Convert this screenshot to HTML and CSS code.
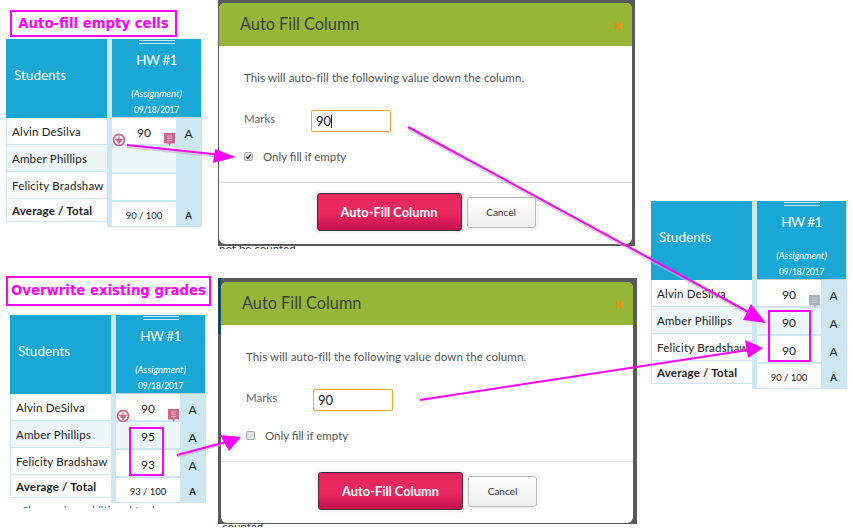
FILE: index.html
```html
<!DOCTYPE html>
<html lang="en">
<head>
    <meta charset="UTF-8">
    <title>Auto Fill Column</title>
    <link rel="stylesheet" href="styles.css">
</head>
<body>
    <div class="canvas">
        <div class="caption caption_top">Auto-fill empty cells</div>
        <div class="caption caption_bottom">Overwrite existing grades</div>

        <div class="sheet sheet_top">
            <div class="names">
                <div class="names-head">Students</div>
                <div class="name">Alvin DeSilva</div>
                <div class="name name_alt">Amber Phillips</div>
                <div class="name">Felicity Bradshaw</div>
                <div class="name name_total">Average / Total</div>
            </div>
            <div class="column">
                <div class="column-head">
                    <div class="grip"></div>
                    <div class="hw">HW #1</div>
                    <div class="kind">(Assignment)</div>
                    <div class="date">09/18/2017</div>
                </div>
                <div class="row">
                    <div class="mark">90
                        <svg class="fill-icon" viewBox="0 0 14 14"><circle cx="7" cy="7" r="5.5"/><path d="M7 3.2v3.4M3.9 6.4h6.2L7 10.2z"/></svg>
                        <svg class="note-icon" viewBox="0 0 11 14"><path d="M0 0h11v10.5H7l-1.5 2.5-1-2.5H0z"/><path class="note-lines" d="M3 3h5M3 5.2h5M3 7.4h5"/></svg>
                    </div>
                    <div class="grade">A</div>
                </div>
                <div class="row">
                    <div class="mark mark_alt"></div>
                    <div class="grade"></div>
                </div>
                <div class="row">
                    <div class="mark"></div>
                    <div class="grade"></div>
                </div>
                <div class="row row_total">
                    <div class="mark">90 / 100</div>
                    <div class="grade">A</div>
                </div>
            </div>
        </div>

        <div class="sheet sheet_bottom">
            <div class="names">
                <div class="names-head">Students</div>
                <div class="name">Alvin DeSilva</div>
                <div class="name name_alt">Amber Phillips</div>
                <div class="name">Felicity Bradshaw</div>
                <div class="name name_total">Average / Total</div>
            </div>
            <div class="column">
                <div class="column-head">
                    <div class="grip"></div>
                    <div class="hw">HW #1</div>
                    <div class="kind">(Assignment)</div>
                    <div class="date">09/18/2017</div>
                </div>
                <div class="row">
                    <div class="mark">90
                        <svg class="fill-icon" viewBox="0 0 14 14"><circle cx="7" cy="7" r="5.5"/><path d="M7 3.2v3.4M3.9 6.4h6.2L7 10.2z"/></svg>
                        <svg class="note-icon" viewBox="0 0 11 14"><path d="M0 0h11v10.5H7l-1.5 2.5-1-2.5H0z"/><path class="note-lines" d="M3 3h5M3 5.2h5M3 7.4h5"/></svg>
                    </div>
                    <div class="grade">A</div>
                </div>
                <div class="row">
                    <div class="mark mark_alt">95</div>
                    <div class="grade">A</div>
                </div>
                <div class="row">
                    <div class="mark">93</div>
                    <div class="grade">A</div>
                </div>
                <div class="row row_total">
                    <div class="mark">93 / 100</div>
                    <div class="grade">A</div>
                </div>
            </div>
        </div>
        <div class="cut-text">Show using additional tools</div>

        <div class="sheet sheet_result">
            <div class="names">
                <div class="names-head">Students</div>
                <div class="name">Alvin DeSilva</div>
                <div class="name name_alt">Amber Phillips</div>
                <div class="name">Felicity Bradshaw</div>
                <div class="name name_total">Average / Total</div>
            </div>
            <div class="column">
                <div class="column-head">
                    <div class="grip"></div>
                    <div class="hw">HW #1</div>
                    <div class="kind">(Assignment)</div>
                    <div class="date">09/18/2017</div>
                </div>
                <div class="row">
                    <div class="mark">90
                        <svg class="note-icon note-icon_grey" viewBox="0 0 11 14"><path d="M0 0h11v10.5H7l-1.5 2.5-1-2.5H0z"/><path class="note-lines" d="M3 3h5M3 5.2h5M3 7.4h5"/></svg>
                    </div>
                    <div class="grade">A</div>
                </div>
                <div class="row">
                    <div class="mark mark_alt">90</div>
                    <div class="grade">A</div>
                </div>
                <div class="row">
                    <div class="mark">90</div>
                    <div class="grade">A</div>
                </div>
                <div class="row row_total">
                    <div class="mark">90 / 100</div>
                    <div class="grade">A</div>
                </div>
            </div>
        </div>

        <div class="frame frame_top">
            <div class="dialog">
                <div class="dialog-head">
                    <span>Auto Fill Column</span>
                    <span class="close">&#10006;</span>
                </div>
                <div class="dialog-body">
                    <p class="intro">This will auto-fill the following value down the column.</p>
                    <div class="field">
                        <label class="field-label">Marks</label>
                        <div class="input">90<i class="caret"></i></div>
                    </div>
                    <div class="check">
                        <span class="box"><svg viewBox="0 0 10 10"><path d="M2 5.2 4.2 7.6 8.2 2.2"/></svg></span>
                        <span>Only fill if empty</span>
                    </div>
                </div>
                <div class="dialog-foot">
                    <button class="btn btn_primary">Auto-Fill Column</button>
                    <button class="btn btn_cancel">Cancel</button>
                </div>
            </div>
        </div>
        <div class="behind behind_top">not be counted</div>

        <div class="frame frame_bottom">
            <div class="dialog">
                <div class="dialog-head">
                    <span>Auto Fill Column</span>
                    <span class="close">&#10006;</span>
                </div>
                <div class="dialog-body">
                    <p class="intro">This will auto-fill the following value down the column.</p>
                    <div class="field">
                        <label class="field-label">Marks</label>
                        <div class="input">90</div>
                    </div>
                    <div class="check">
                        <span class="box"></span>
                        <span>Only fill if empty</span>
                    </div>
                </div>
                <div class="dialog-foot">
                    <button class="btn btn_primary">Auto-Fill Column</button>
                    <button class="btn btn_cancel">Cancel</button>
                </div>
            </div>
        </div>
        <div class="behind behind_bottom">counted</div>

        <!-- pink boxes and arrows drawn on top of everything -->
        <svg class="marks" width="853" height="532" viewBox="0 0 853 532">
            <g class="arrow-shadow">
                <path d="M127 147 220 157"/>
                <path d="M408 129 752 316"/>
                <path d="M177 457 224 444"/>
            </g>
            <rect class="mark-box" x="130" y="428" width="33" height="47"/>
            <rect class="mark-box" x="769" y="311" width="41" height="50"/>
            <g class="arrow">
                <path d="M127 145 222 155"/>
                <polygon points="236,157 215,149 213,163"/>
                <path d="M408 127 752 314"/>
                <polygon points="766,323 751,304 743,320"/>
                <path d="M420 400 748 350"/>
                <polygon points="763,348 745,340 748,358"/>
                <path d="M177 455 226 442"/>
                <polygon points="241,437 220,435 229,451"/>
            </g>
        </svg>
    </div>
</body>
</html>
```

FILE: styles.css
```css
html, body {
    margin: 0;
    height: 100%;
}
body {
    background-color: #fff;
    font-family: Lato, "Open Sans", sans-serif;
    color: #222;
}
.canvas {
    position: relative;
    width: 853px;
    height: 532px;
    overflow: hidden;
}

/* labels over the two examples */
.caption {
    position: absolute;
    box-sizing: border-box;
    border: 2px solid #f0f;
    color: #f0f;
    font-family: "DejaVu Sans", sans-serif;
    font-weight: bold;
    font-size: 13.3px;
    text-align: center;
    white-space: nowrap;
}
.caption_top {
    left: 10px;
    top: 10px;
    width: 167px;
    height: 27px;
    line-height: 23px;
}
.caption_bottom {
    left: 6px;
    top: 276px;
    width: 205px;
    height: 30px;
    line-height: 26px;
}

/* gradebook pieces */
.sheet {
    position: absolute;
    display: flex;
    width: 196px;
    height: 188px;
}
.sheet_top {
    left: 6px;
    top: 39px;
}
.sheet_bottom {
    left: 10px;
    top: 315px;
}
.sheet_result {
    left: 651px;
    top: 201px;
}
.names {
    width: 101px;
    flex: none;
}
.names-head {
    box-sizing: border-box;
    height: 79px;
    line-height: 72px;
    padding-left: 8px;
    background-color: #19a8d5;
    color: #fff;
    font-size: 13.5px;
}
.name {
    box-sizing: border-box;
    height: 27px;
    padding: 2px 0 0 5px;
    line-height: 24px;
    font-size: 11.5px;
    letter-spacing: 0.2px;
    white-space: nowrap;
    border: 1px solid #cde8f2;
    border-width: 0 0 1px 1px;
    color: #222;
}
.name_alt {
    background-color: #edf6f9;
}
.name_total {
    height: 23px;
    line-height: 20px;
    font-weight: bold;
}
.column {
    flex: 1;
    padding: 0 1px 0 5px;
    background-color: #cde8f2;
}
.column-head {
    height: 79px;
    background-color: #19a8d5;
    color: #fff;
    text-align: center;
    border-bottom: 1px solid #b9ced6;
    box-sizing: border-box;
}
.grip {
    width: 36px;
    height: 2px;
    margin: 0 auto;
    border-top: 1px solid #cde8f2;
    border-bottom: 1px solid #cde8f2;
    position: relative;
    top: 1px;
}
.hw {
    margin-top: 8px;
    font-size: 13.5px;
    letter-spacing: -0.5px;
    line-height: 18px;
}
.kind {
    margin-top: 19px;
    font-size: 9.5px;
    font-style: italic;
    line-height: 12px;
}
.date {
    margin-top: 4px;
    font-size: 8.5px;
    letter-spacing: -0.2px;
    line-height: 12px;
}
.row {
    display: flex;
    height: 28px;
    font-size: 12px;
}
.row_total {
    height: 24px;
    font-size: 9.5px;
}
.mark {
    position: relative;
    width: 64px;
    box-sizing: border-box;
    padding-top: 2px;
    text-align: center;
    line-height: 25px;
    background-color: #fff;
    border-bottom: 2px solid #cde8f2;
}
.mark_alt {
    background-color: #edf6f9;
}
.row_total .mark {
    border-bottom: 0;
    padding-top: 0;
    line-height: 28px;
}
.grade {
    flex: 1;
    padding-top: 2px;
    text-align: center;
    line-height: 27px;
}
.row_total .grade {
    padding-top: 0;
    line-height: 28px;
    font-weight: bold;
}
.fill-icon {
    position: absolute;
    left: 0;
    top: 15px;
    width: 14px;
    height: 14px;
}
.fill-icon circle {
    fill: #fff;
    stroke: #c9688c;
    stroke-width: 1.8;
}
.fill-icon path {
    fill: #c9688c;
    stroke: #c9688c;
    stroke-width: 1.2;
}
.note-icon {
    position: absolute;
    right: 1px;
    top: 15px;
    width: 11px;
    height: 14px;
    fill: #c9688c;
}
.note-icon_grey {
    fill: #9ab8c2;
}
.note-lines {
    fill: none;
    stroke: #eeb9cc;
    stroke-width: 1;
}
.cut-text {
    position: absolute;
    left: 22px;
    top: 504px;
    height: 4px;
    overflow: hidden;
    font-size: 11.5px;
    line-height: 14px;
    color: #1f6f80;
    white-space: nowrap;
}

/* dialog screenshots */
.frame {
    position: absolute;
    box-sizing: border-box;
    background-color: #5a5a5a;
    overflow: hidden;
}
.frame_top {
    left: 218px;
    top: 0;
    width: 417px;
    height: 246px;
    padding: 3px 3px 0 1px;
}
.frame_bottom {
    left: 218px;
    top: 278px;
    width: 419px;
    height: 246px;
    padding: 4px 4px 0 3px;
    background: linear-gradient(#124a5c, #124a5c) 0 0 / 3px 56px no-repeat, #5a5a5a;
}
.dialog {
    display: flex;
    flex-direction: column;
    height: 241px;
    border-radius: 6px;
    background-color: #fff;
    overflow: hidden;
}
.dialog-head {
    display: flex;
    justify-content: space-between;
    align-items: center;
    height: 43px;
    flex: none;
    padding: 0 9px 3px 21px;
    box-sizing: border-box;
    background-color: #97b637;
    color: #3b3f37;
    font-size: 16.3px;
}
.close {
    color: #e8920f;
    font-size: 11px;
    margin-top: 6px;
    font-family: "DejaVu Sans", sans-serif;
}
.dialog-body {
    flex: 1;
    padding: 24px 25px 0;
    font-size: 11.5px;
    color: #555;
}
.intro {
    margin: 0;
    line-height: 16px;
    letter-spacing: 0.1px;
}
.field {
    display: flex;
    align-items: center;
    margin-top: 24px;
}
.field-label {
    width: 67px;
    margin-top: -5px;
    color: #666;
}
.input {
    box-sizing: border-box;
    width: 80px;
    height: 22px;
    padding-left: 4px;
    line-height: 21px;
    border: 1px solid #f5a623;
    border-radius: 2px;
    font-size: 13px;
    color: #222;
}
.caret {
    display: inline-block;
    width: 1px;
    height: 13px;
    background-color: #222;
    vertical-align: -2px;
}
.check {
    display: flex;
    align-items: center;
    gap: 10px;
    margin-top: 18px;
}
.box {
    box-sizing: border-box;
    width: 9px;
    height: 9px;
    border: 1px solid #aaa;
    border-radius: 2px;
    background-color: #e4e4e4;
}
.box svg {
    display: block;
    width: 7px;
    height: 7px;
    fill: none;
    stroke: #333;
    stroke-width: 2;
}
.dialog-foot {
    display: flex;
    justify-content: center;
    align-items: center;
    gap: 5px;
    height: 62px;
    flex: none;
    border-top: 1px solid #ddd;
    box-sizing: border-box;
    padding: 0 0 3px 1px;
}
.btn {
    font-family: Lato, "Open Sans", sans-serif;
    box-sizing: border-box;
    box-shadow: 0 0 0 3px #f5f5f5;
}
.btn_primary {
    width: 145px;
    height: 38px;
    border: 1px solid #4a2a33;
    border-radius: 3px;
    background: linear-gradient(#e9285f 55%, #c40f50);
    color: #fff;
    font-weight: bold;
    font-size: 12.8px;
}
.btn_cancel {
    width: 69px;
    height: 31px;
    border: 1px solid #bbb;
    border-radius: 3px;
    background: linear-gradient(#fff, #eee);
    color: #333;
    font-size: 10px;
}
/* what shows under the dialog screenshots, only the tops of the letters */
.behind {
    position: absolute;
    left: 219px;
    height: 3px;
    overflow: hidden;
    font-size: 11.5px;
    line-height: 6px;
    color: #333;
    white-space: nowrap;
}
.behind_top {
    top: 246px;
}
.behind_bottom {
    left: 222px;
    top: 524px;
}

/* overlay */
.marks {
    position: absolute;
    left: 0;
    top: 0;
}
.mark-box {
    fill: none;
    stroke: #f0f;
    stroke-width: 2;
}
.arrow path {
    stroke: #f0f;
    stroke-width: 2;
    fill: none;
}
.arrow polygon {
    fill: #f0f;
}
.arrow-shadow path {
    stroke: #bbb;
    stroke-width: 2;
    fill: none;
    opacity: 0.6;
}
```
